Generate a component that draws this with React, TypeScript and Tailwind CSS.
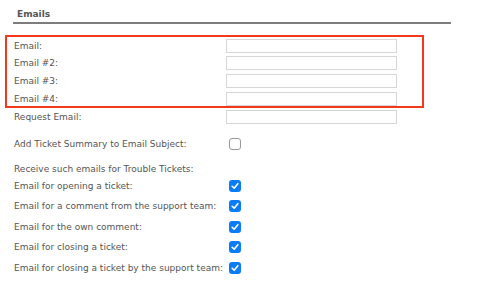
const emailRows = ["Email:", "Email #2:", "Email #3:", "Email #4:", "Request Email:"]

const ticketRows = [
  "Email for opening a ticket:",
  "Email for a comment from the support team:",
  "Email for the own comment:",
  "Email for closing a ticket:",
  "Email for closing a ticket by the support team:",
]

function Box({ checked }: { checked?: boolean }) {
  if (!checked) {
    return <span className="block size-[12px] rounded-[3px] border border-[#9a9a9a] bg-white" />
  }
  return (
    <span className="flex size-[12px] items-center justify-center rounded-[3px] bg-[#0b7cf8]">
      <svg viewBox="0 0 12 12" className="size-[10px]">
        <path d="M2.6 6.3 L5 8.6 L9.4 3.2" fill="none" stroke="white" strokeWidth="1.9" strokeLinecap="round" strokeLinejoin="round" />
      </svg>
    </span>
  )
}

export default function App() {
  return (
    <div className="relative h-[294px] w-[500px] overflow-hidden bg-white font-['DejaVu_Sans',sans-serif] text-[9px] text-[#555]">
      <div className="pl-[17px] pt-[8px] font-bold leading-[12px]">Emails</div>
      <div className="ml-[13px] mt-[2px] h-[1.5px] w-[438px] bg-[#7d7d7d]" />

      <div className="mt-[15px] flex flex-col gap-[3.75px] pl-[14px]">
        {emailRows.map((label) => (
          <div key={label} className="flex h-[14px] items-center">
            <span className="w-[212px] leading-[12px]">{label}</span>
            <span className="h-[14px] w-[171px] border border-[#d6d6d6] bg-white" />
          </div>
        ))}
      </div>

      <div className="mt-[14px] flex h-[12px] items-center pl-[14px]">
        <span className="w-[215px] leading-[12px]">Add Ticket Summary to Email Subject:</span>
        <Box />
      </div>

      <div className="mt-[13px] pl-[14px] leading-[12px]">Receive such emails for Trouble Tickets:</div>

      <div className="mt-[5.3px] flex flex-col gap-[8.5px] pl-[14px]">
        {ticketRows.map((label) => (
          <div key={label} className="flex h-[12px] items-center">
            <span className="w-[215px] leading-[12px]">{label}</span>
            <Box checked />
          </div>
        ))}
      </div>

      {/* highlight annotation */}
      <div className="pointer-events-none absolute left-[5px] top-[35px] h-[73px] w-[419px] border-2 border-[#f3391b]" />
    </div>
  )
}
